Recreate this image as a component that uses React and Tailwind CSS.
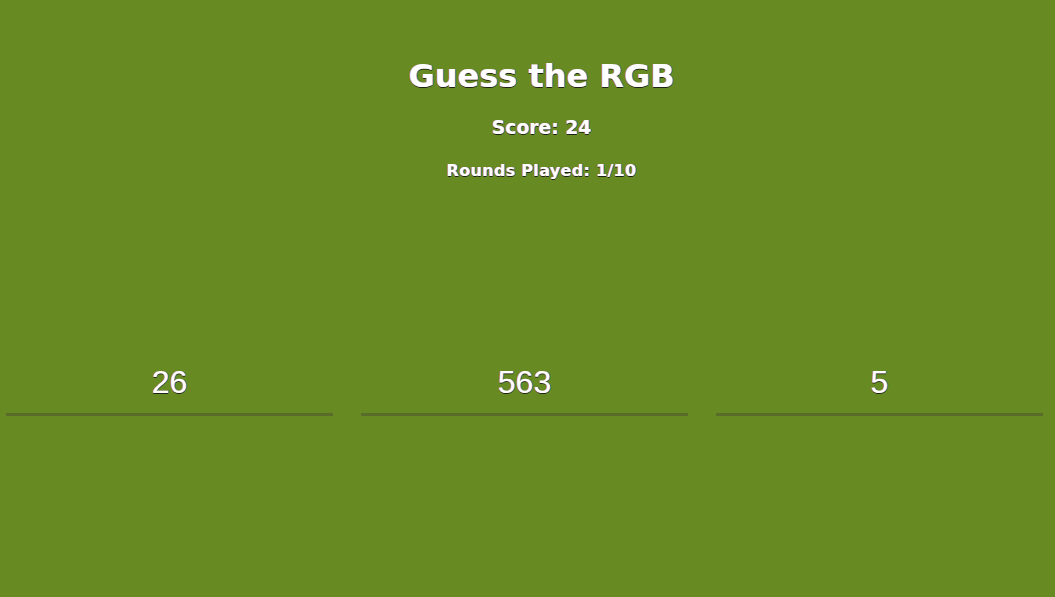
import { useState } from "react";

const shadow =
  "[text-shadow:-1px_0_rgba(230,120,20,0.75),1px_0_rgba(20,110,230,0.75),0_1px_rgba(20,20,20,0.9)]";

const App = () => {
  const [values, setValues] = useState(["26", "563", "5"]);

  const update = (i, v) => {
    const next = [...values];
    next[i] = v;
    setValues(next);
  };

  return (
    <div className="min-h-[597px] bg-[#678a23] text-white">
      {/* Header */}
      <div className="pt-[58px] pl-[28px] text-center font-['DejaVu_Sans',sans-serif] font-bold">
        <h1 className={`text-[32px] leading-[37px] ${shadow}`}>Guess the RGB</h1>
        <h3 className={`mt-[22px] text-[18.72px] leading-[22px] ${shadow}`}>Score: 24</h3>
        <h4 className={`mt-[22px] text-[16px] leading-[19px] tracking-[0.3px] ${shadow}`}>
          Rounds Played: 1/10
        </h4>
      </div>

      {/* Guesses */}
      <div className="mt-[184px] flex gap-[28px] pl-[6px]">
        {values.map((v, i) => (
          <input
            key={i}
            value={v}
            onChange={(e) => update(i, e.target.value)}
            className={`w-[327px] bg-transparent border-b-[3px] border-[#5a6c2a] text-center text-[32px] leading-[37px] pb-[12px] font-['Liberation_Sans',Arial,sans-serif] text-white outline-none ${shadow}`}
          />
        ))}
      </div>
    </div>
  );
};

export default App;
